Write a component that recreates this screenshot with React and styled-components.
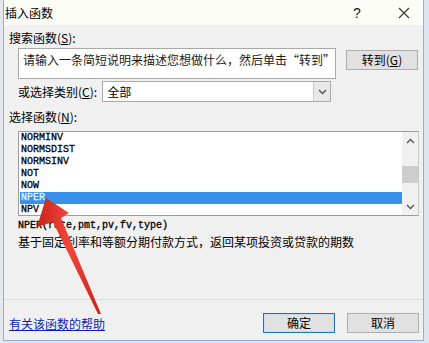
import React from "react";
import styled, { createGlobalStyle } from "styled-components";

const GlobalStyle = createGlobalStyle`
  html, body {
    margin: 0;
    padding: 0;
    background: #dde4ec;
  }
  body {
    font-family: "Noto Sans CJK SC", "Noto Sans", sans-serif;
    font-size: 12px;
    color: #000;
  }
`;

const Page = styled.div`
  position: relative;
  width: 429px;
  height: 343px;
  overflow: hidden;
  padding-left: 3px;
  box-sizing: border-box;
  background: linear-gradient(90deg, #e4e8ee 0, #e4e8ee 3px, #dde5ef 3px);
`;

const Window = styled.div`
  width: 421px;
  height: 341px;
  box-sizing: border-box;
  border: 1px solid #8fb0d4;
  border-top: none;
  background: #f0f0f0;
  display: flex;
  flex-direction: column;
`;

const TitleBar = styled.div`
  height: 25px;
  flex: none;
  background: #fdfdf7;
  display: flex;
  align-items: center;
  padding-left: 1px;
  font-size: 12px;
`;

const Title = styled.span`
  flex: 1;
  line-height: 14px;
`;

const TitleButton = styled.span`
  width: ${(p) => p.$w}px;
  margin-left: ${(p) => p.$left || 0}px;
  margin-right: ${(p) => p.$right || 0}px;
  display: flex;
  justify-content: center;
  font-family: "Liberation Sans", sans-serif;
  font-size: 14px;
  color: #222;
  line-height: 14px;
`;

const Body = styled.div`
  flex: 1;
  display: flex;
  flex-direction: column;
  padding: 0 4px 0 5px;
`;

const Label = styled.div`
  height: 14px;
  line-height: 14px;
  margin-top: ${(p) => p.$top || 0}px;
  white-space: nowrap;
`;

const Key = styled.span`
  text-decoration: underline;
`;

const SearchRow = styled.div`
  display: flex;
  align-items: flex-start;
  margin: 3px 0 0 9px;
  gap: 10px;
`;

const SearchBox = styled.div`
  width: 318px;
  height: 31px;
  box-sizing: border-box;
  border: 1px solid #a9a9a9;
  background: #fff;
  padding: 4px 0 0 4px;
  line-height: 14px;
  color: #1a1a1a;
  white-space: nowrap;
  overflow: hidden;
`;

const Button = styled.div`
  width: 72px;
  height: 20px;
  box-sizing: border-box;
  margin-top: ${(p) => p.$top || 0}px;
  border: 1px solid ${(p) => (p.$focused ? "#1e73c0" : "#adadad")};
  box-shadow: ${(p) => (p.$focused ? "inset 0 0 0 1px #c6dcf0" : "none")};
  background: #e1e1e1;
  display: flex;
  align-items: center;
  justify-content: center;
  line-height: 14px;
`;

const CategoryRow = styled.div`
  display: flex;
  align-items: center;
  margin: 2px 0 0 9px;
  gap: 5px;
`;

const Combo = styled.div`
  width: 229px;
  height: 21px;
  box-sizing: border-box;
  border: 1px solid #a9a9a9;
  background: #fff;
  display: flex;
  align-items: stretch;
`;

const ComboText = styled.div`
  flex: 1;
  padding-left: 4px;
  display: flex;
  align-items: center;
`;

const ComboArrow = styled.div`
  width: 16px;
  background: #e9e9e9;
  border-left: 1px solid #c8c8c8;
  display: flex;
  align-items: center;
  justify-content: center;
`;

const List = styled.div`
  margin: 7px 0 0 9px;
  width: 401px;
  height: 85px;
  box-sizing: border-box;
  border: 1px solid #9c9c9c;
  border-right-color: #c9c9c9;
  background: #fff;
  display: flex;
`;

const Rows = styled.div`
  flex: 1;
  padding-left: 1px;
`;

const Row = styled.div`
  height: 12px;
  line-height: 12px;
  padding-left: 1px;
  font-family: "Liberation Mono", "DejaVu Sans Mono", monospace;
  font-size: 10px;
  background: ${(p) => (p.$selected ? "#3791ea" : "transparent")};
  color: ${(p) => (p.$selected ? "#dff4ff" : "#000")};
  -webkit-text-stroke: 0.3px currentColor;
`;

const ScrollBar = styled.div`
  width: 16px;
  background: #f0f0f0;
  display: flex;
  flex-direction: column;
  align-items: center;
`;

const ScrollArrow = styled.div`
  height: 17px;
  width: 100%;
  display: flex;
  align-items: center;
  justify-content: center;
`;

const Track = styled.div`
  flex: 1;
  width: 100%;
  display: flex;
  flex-direction: column;
  justify-content: flex-end;
  padding-bottom: 15px;
  box-sizing: border-box;
`;

const Thumb = styled.div`
  height: 17px;
  background: #cdcdcd;
`;

const Signature = styled.div`
  margin: 3px 0 0 9px;
  height: 14px;
  line-height: 14px;
  font-family: "Liberation Mono", "DejaVu Sans Mono", monospace;
  font-size: 10px;
  color: #000;
  -webkit-text-stroke: 0.3px currentColor;
`;

const Description = styled.div`
  margin: 2px 0 0 9px;
  height: 14px;
  line-height: 14px;
  white-space: nowrap;
`;

const Separator = styled.div`
  margin: 50px -4px 0 -5px;
  height: 1px;
  background: #dcdcdc;
`;

const Footer = styled.div`
  display: flex;
  align-items: center;
  margin-top: 13px;
  gap: 12px;
`;

const HelpLink = styled.a`
  flex: 1;
  color: #0a1fb0;
  text-decoration: underline;
  line-height: 14px;
  margin-top: 2px;
`;

const Arrow = styled.svg`
  position: absolute;
  left: 0;
  top: 0;
  pointer-events: none;
`;

const Chevron = ({ up }) => (
  <svg width="9" height="6" viewBox="0 0 9 6">
    <path
      d={up ? "M1 5 L4.5 1.5 L8 5" : "M1 1 L4.5 4.5 L8 1"}
      fill="none"
      stroke="#555"
      strokeWidth="1.4"
    />
  </svg>
);

const functions = ["NORMINV", "NORMSDIST", "NORMSINV", "NOT", "NOW", "NPER", "NPV"];

export default function App() {
  return (
    <>
      <GlobalStyle />
      <Page>
        <Window>
          <TitleBar>
            <Title>插入函数</Title>
            <TitleButton $w={20}>?</TitleButton>
            <TitleButton $w={26} $left={24} $right={6}>
              <svg width="12" height="12" viewBox="0 0 12 12">
                <path d="M1 1 L11 11 M11 1 L1 11" stroke="#333" strokeWidth="1.1" />
              </svg>
            </TitleButton>
          </TitleBar>
          <Body>
            <Label $top={6}>
              搜索函数(<Key>S</Key>):
            </Label>
            <SearchRow>
              <SearchBox>请输入一条简短说明来描述您想做什么，然后单击“转到”</SearchBox>
              <Button $top={2}>
                转到(<Key>G</Key>)
              </Button>
            </SearchRow>
            <CategoryRow>
              <Label>
                或选择类别(<Key>C</Key>):
              </Label>
              <Combo>
                <ComboText>全部</ComboText>
                <ComboArrow>
                  <Chevron />
                </ComboArrow>
              </Combo>
            </CategoryRow>
            <Label $top={8}>
              选择函数(<Key>N</Key>):
            </Label>
            <List>
              <Rows>
                {functions.map((f) => (
                  <Row key={f} $selected={f === "NPER"}>
                    {f}
                  </Row>
                ))}
              </Rows>
              <ScrollBar>
                <ScrollArrow>
                  <Chevron up />
                </ScrollArrow>
                <Track>
                  <Thumb />
                </Track>
                <ScrollArrow>
                  <Chevron />
                </ScrollArrow>
              </ScrollBar>
            </List>
            <Signature>NPER(rate,pmt,pv,fv,type)</Signature>
            <Description>基于固定利率和等额分期付款方式，返回某项投资或贷款的期数</Description>
            <Separator />
            <Footer>
              <HelpLink href="#">有关该函数的帮助</HelpLink>
              <Button $focused>确定</Button>
              <Button>取消</Button>
            </Footer>
          </Body>
        </Window>
        <Arrow width="429" height="343" viewBox="0 0 429 343">
          <defs>
            <linearGradient id="redg" x1="0" y1="0" x2="1" y2="0">
              <stop offset="0" stopColor="#c9221c" />
              <stop offset="0.5" stopColor="#f0473a" />
              <stop offset="1" stopColor="#c9221c" />
            </linearGradient>
          </defs>
          <polygon
            points="46,198 69,213 61,218 101,314 98,314 53,222 37,227"
            fill="url(#redg)"
          />
        </Arrow>
      </Page>
    </>
  );
}
